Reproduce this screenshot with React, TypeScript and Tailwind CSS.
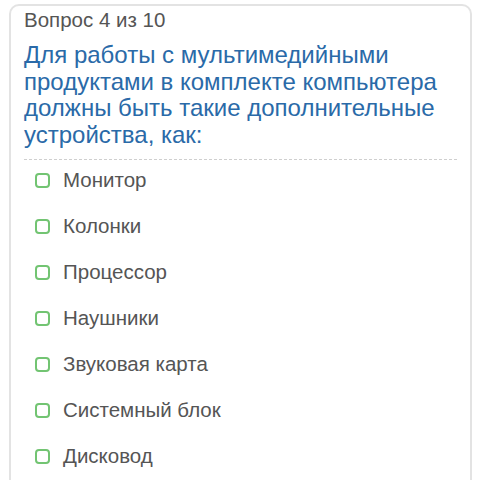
const OPTIONS = [
  "Монитор",
  "Колонки",
  "Процессор",
  "Наушники",
  "Звуковая карта",
  "Системный блок",
  "Дисковод",
];

export default function App() {
  return (
    <div className="h-[480px] w-[480px] overflow-hidden bg-white pl-[9px] pr-[8px] pt-[4px] font-['Liberation_Sans',Arial,sans-serif]">
      <div className="h-[520px] rounded-t-[10px] border-2 border-[#e3e3e3] px-[13px]">
        <div className="text-[20.5px] leading-[28px] text-[#555]">Вопрос 4 из 10</div>
        <h1 className="mt-[8px] text-[24px] leading-[26.5px] text-[#2a6aa8]">
          Для работы с мультимедийными продуктами в комплекте компьютера должны быть
          такие дополнительные устройства, как:
        </h1>
        <div className="mt-[11px] border-t border-dashed border-[#cfcfcf]" />
        <ul className="pl-[11px]">
          {OPTIONS.map((o) => (
            <li key={o} className="flex h-[46px] items-center gap-[13px] pb-[6px]">
              <span className="block h-[15px] w-[15px] shrink-0 rounded-[4px] border-2 border-[#72c472]" />
              <span className="text-[20.5px] text-[#555]">{o}</span>
            </li>
          ))}
        </ul>
      </div>
    </div>
  );
}
